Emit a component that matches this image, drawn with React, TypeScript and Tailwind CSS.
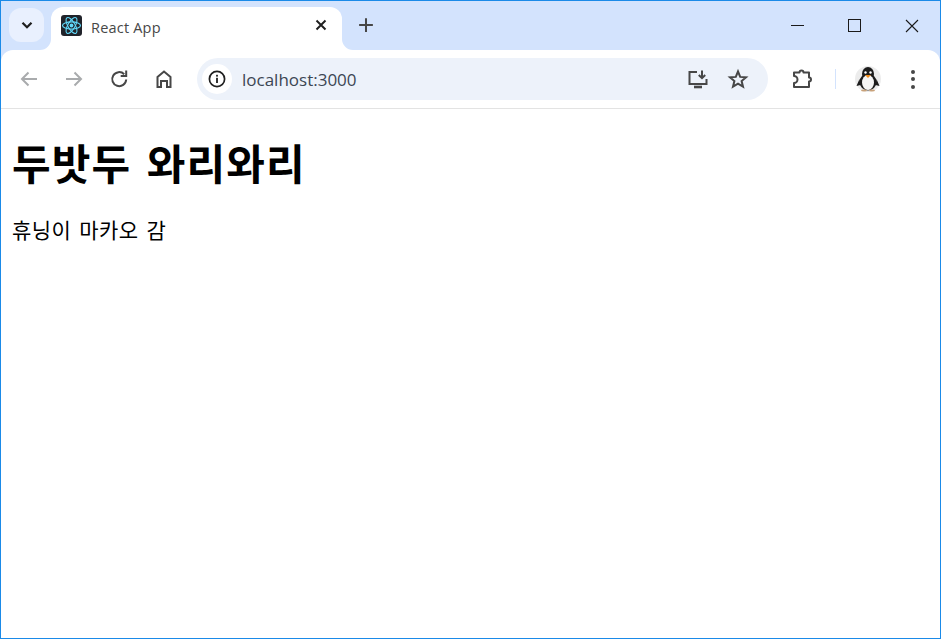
import React from 'react';

const kr = { fontFamily: '"Noto Sans CJK KR", "Liberation Sans", sans-serif' };

const Icon: React.FC<{ size?: number; children: React.ReactNode; color?: string; width?: number }> = ({
  size = 24,
  children,
  color = '#474747',
  width = 2,
}) => (
  <svg width={size} height={size} viewBox="0 0 24 24" fill="none" stroke={color} strokeWidth={width} strokeLinecap="butt" strokeLinejoin="miter">
    {children}
  </svg>
);

const ReactLogo = () => (
  <svg width="21" height="21" viewBox="0 0 21 21">
    <rect width="21" height="21" rx="3" fill="#20232a" />
    <g fill="none" stroke="#61dafb" strokeWidth="1.1">
      <ellipse cx="10.5" cy="10.5" rx="9" ry="3.6" />
      <ellipse cx="10.5" cy="10.5" rx="9" ry="3.6" transform="rotate(60 10.5 10.5)" />
      <ellipse cx="10.5" cy="10.5" rx="9" ry="3.6" transform="rotate(120 10.5 10.5)" />
    </g>
    <circle cx="10.5" cy="10.5" r="1.9" fill="#61dafb" />
  </svg>
);

const Penguin = () => (
  <svg width="26" height="26" viewBox="0 0 26 26">
    <circle cx="13" cy="13" r="13" fill="#ececec" />
    <ellipse cx="13" cy="8" rx="6" ry="7" fill="#1c1c1c" />
    <ellipse cx="13" cy="16" rx="8.5" ry="8.5" fill="#1c1c1c" />
    <path d="M4.5 13 L1.5 20 L5.5 19 Z M21.5 13 L24.5 20 L20.5 19 Z" fill="#1c1c1c" />
    <ellipse cx="13" cy="16.5" rx="6" ry="7.5" fill="#f5f5f5" />
    <circle cx="10.5" cy="6.5" r="1.2" fill="#fff" />
    <circle cx="15.5" cy="6.5" r="1.2" fill="#fff" />
    <path d="M10 9 L16 9 L13 12 Z" fill="#f08c1a" />
    <ellipse cx="9" cy="24.5" rx="3" ry="1" fill="#c9a27a" />
    <ellipse cx="17" cy="24.5" rx="3" ry="1" fill="#c9a27a" />
  </svg>
);

const ToolButton: React.FC<{ children: React.ReactNode; className?: string }> = ({ children, className = 'w-[45px]' }) => (
  <div className={`flex h-9 shrink-0 items-center justify-center ${className}`}>{children}</div>
);

export default function App() {
  return (
    <div className="flex h-screen w-full flex-col border border-[#1a8ae8] bg-white">
      <div className="flex h-[49px] shrink-0 items-start bg-[#d3e3fd]">
        <div className="ml-2 mt-[7px] flex h-[34px] w-[35px] shrink-0 items-center justify-center rounded-xl bg-[#e9f0fe]">
          <Icon size={18} color="#1f1f1f" width={3}>
            <path d="M6 9 L12 15 L18 9" />
          </Icon>
        </div>
        <div className="relative ml-[7px] mt-[6px] flex h-[43px] w-[291px] shrink-0 items-start rounded-t-xl bg-white pl-[10px] pt-2">
          <svg className="absolute bottom-0 left-[-11px]" width="11" height="11" viewBox="0 0 11 11">
            <path d="M11 0 A11 11 0 0 1 0 11 L11 11 Z" fill="#fff" />
          </svg>
          <svg className="absolute bottom-0 right-[-11px]" width="11" height="11" viewBox="0 0 11 11">
            <path d="M0 0 A11 11 0 0 0 11 11 L0 11 Z" fill="#fff" />
          </svg>
          <ReactLogo />
          <span className="ml-[9px] mt-[3px] text-[14.5px] leading-[20px] tracking-[0.2px] text-[#474747]" style={{ fontFamily: '"Open Sans", sans-serif' }}>
            React App
          </span>
          <div className="ml-auto mr-[12px] mt-[1px]">
            <Icon size={18} color="#1f1f1f" width={2.6}>
              <path d="M6 6 L18 18 M18 6 L6 18" />
            </Icon>
          </div>
        </div>
        <div className="ml-[10px] mt-[10px] flex h-7 w-7 shrink-0 items-center justify-center">
          <Icon size={22} color="#474747" width={2.2}>
            <path d="M12 4.5 V19.5 M4.5 12 H19.5" />
          </Icon>
        </div>
        <div className="flex-1" />
        <div className="flex h-full items-start">
          <div className="flex h-[49px] w-[57px] items-center justify-center">
            <div className="h-px w-[13px] bg-[#1a1a1a]" />
          </div>
          <div className="flex h-[49px] w-[57px] items-center justify-center">
            <div className="h-[13px] w-[13px] border border-[#1a1a1a]" />
          </div>
          <div className="flex h-[49px] w-[57px] items-center justify-center">
            <svg width="14" height="14" viewBox="0 0 14 14" stroke="#1a1a1a" strokeWidth="1.1">
              <path d="M1 1 L13 13 M13 1 L1 13" />
            </svg>
          </div>
        </div>
      </div>

      <div className="bg-[#d3e3fd]">
        <div className="flex h-[59px] items-center rounded-t-xl border-b border-[#e3e3e3] bg-white pl-[5px]">
          <ToolButton>
            <Icon size={24} color="#a9abad">
              <path d="M20 12 H5 M11.5 5.5 L5 12 L11.5 18.5" />
            </Icon>
          </ToolButton>
          <ToolButton>
            <Icon size={24} color="#a9abad">
              <path d="M4 12 H19 M12.5 5.5 L19 12 L12.5 18.5" />
            </Icon>
          </ToolButton>
          <ToolButton>
            <Icon size={24}>
              <path d="M19.2 12.5 A7 7 0 1 1 17.2 7.2" />
              <path d="M19.2 3.5 V9 H13.7" />
            </Icon>
          </ToolButton>
          <ToolButton>
            <Icon size={24}>
              <path d="M5.5 20 V10 L12 4.5 L18.5 10 V20 H15 V14 H9 V20 Z" />
            </Icon>
          </ToolButton>
          <div className="ml-[11px] flex h-[42px] w-[571px] shrink-0 items-center rounded-full bg-[#edf2fa] pl-[5px] pr-[10px]">
            <div className="flex h-[30px] w-[30px] items-center justify-center rounded-full bg-white">
              <svg width="18" height="18" viewBox="0 0 18 18">
                <circle cx="9" cy="9" r="7.6" fill="none" stroke="#1f1f1f" strokeWidth="1.7" />
                <rect x="8.1" y="7.8" width="1.8" height="5.2" fill="#1f1f1f" />
                <rect x="8.1" y="4.8" width="1.8" height="1.8" fill="#1f1f1f" />
              </svg>
            </div>
            <span className="ml-[10px] mt-px text-[17px] leading-6 text-[#3c4653]" style={{ fontFamily: '"Open Sans", sans-serif' }}>
              localhost:3000
            </span>
            <div className="ml-auto flex items-center">
              <ToolButton className="w-[40px]">
                <Icon size={24}>
                  <path d="M11 5 H3.5 V17 H20.5 V12" />
                  <path d="M8 20 H16" strokeWidth={2.6} />
                  <path d="M16 3.5 V11 M12.8 8 L16 11.2 L19.2 8" />
                </Icon>
              </ToolButton>
              <ToolButton className="w-[40px]">
                <Icon size={24}>
                  <path d="M12 4.5 L14.2 9.9 L20 10.3 L15.6 14 L17 19.7 L12 16.6 L7 19.7 L8.4 14 L4 10.3 L9.8 9.9 Z" />
                </Icon>
              </ToolButton>
            </div>
          </div>
          <ToolButton className="ml-4 w-9">
            <Icon size={24}>
              <path d="M4 9 V5.5 H9.5 A2 2 0 0 1 13.5 5.5 H19 V10.5 A2 2 0 0 1 19 14.5 V20 H4 V16 A3.5 3.5 0 0 0 4 9 Z" strokeLinejoin="round" />
            </Icon>
          </ToolButton>
          <div className="ml-[14.5px] h-5 w-[1.5px] shrink-0 bg-[#d3e3fd]" />
          <ToolButton className="ml-[14px] w-9">
            <Penguin />
          </ToolButton>
          <ToolButton className="ml-[9px] w-9">
            <div className="flex flex-col gap-[3.5px]">
              <div className="h-1 w-1 rounded-full bg-[#474747]" />
              <div className="h-1 w-1 rounded-full bg-[#474747]" />
              <div className="h-1 w-1 rounded-full bg-[#474747]" />
            </div>
          </ToolButton>
        </div>
      </div>

      <div className="flex-1 bg-white px-[11px] text-black" style={kr}>
        <h1 className="mt-[23px] text-[42px] font-bold leading-[60px] tracking-[1.1px] [word-spacing:5px]">두밧두 와리와리</h1>
        <p className="mt-[22px] text-[21px] leading-[30px] tracking-[0.4px] [word-spacing:3px]">휴닝이 마카오 감</p>
      </div>
    </div>
  );
}
